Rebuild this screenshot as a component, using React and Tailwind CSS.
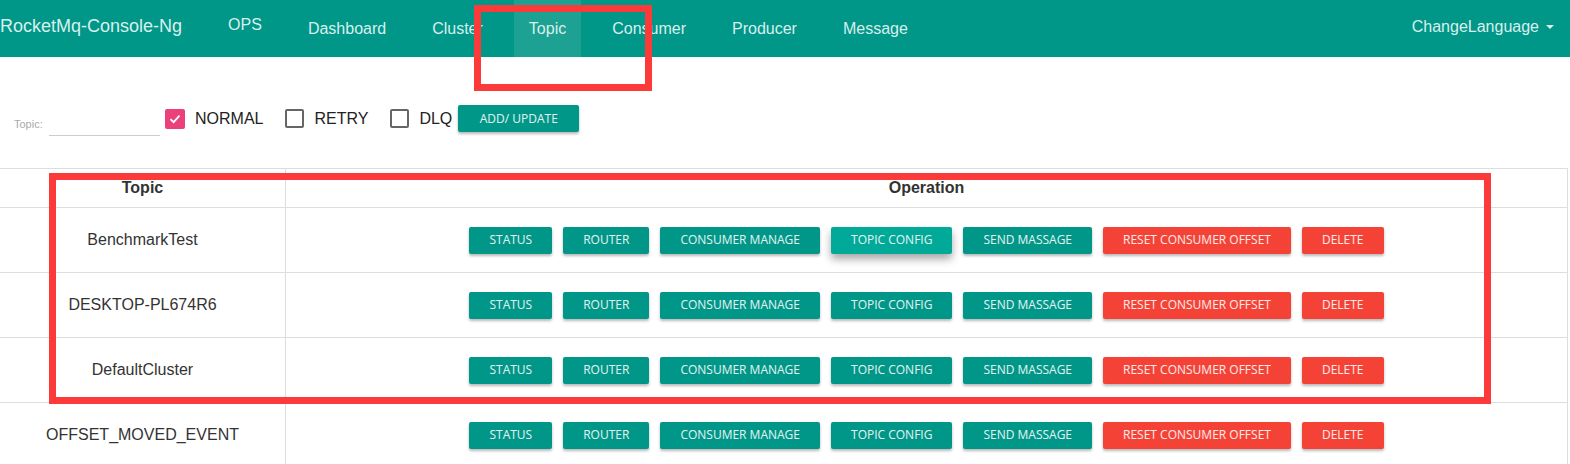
import React from 'react'

const navItems = ['Dashboard', 'Cluster', 'Topic', 'Consumer', 'Producer', 'Message']

const topics = ['BenchmarkTest', 'DESKTOP-PL674R6', 'DefaultCluster', 'OFFSET_MOVED_EVENT']

const ops = [
  { label: 'STATUS', red: false },
  { label: 'ROUTER', red: false },
  { label: 'CONSUMER MANAGE', red: false },
  { label: 'TOPIC CONFIG', red: false },
  { label: 'SEND MASSAGE', red: false },
  { label: 'RESET CONSUMER OFFSET', red: true },
  { label: 'DELETE', red: true },
]

const OpButton = ({ label, red, hover }) => {
  let cls = 'bg-[#009688] shadow-[0_2px_3px_rgba(0,0,0,0.28)]'
  if (red) cls = 'bg-[#f44336] shadow-[0_2px_3px_rgba(0,0,0,0.28)]'
  if (hover) cls = 'bg-[#00a998] shadow-[0_5px_9px_rgba(0,0,0,0.35)]'
  return (
    <button
      className={`h-[27px] px-[20px] rounded-[2px] text-[12px] font-medium text-white/90 whitespace-nowrap ${cls}`}
      style={{ fontFamily: '"Open Sans", sans-serif' }}
    >
      {label}
    </button>
  )
}

const Checkbox = ({ label, checked }) => (
  <label className="flex items-center gap-[10px] text-[16px] text-[#222]">
    {checked ? (
      <span className="w-[20px] h-[20px] rounded-[2px] bg-[#ec407a] flex items-center justify-center">
        <svg width="14" height="14" viewBox="0 0 14 14">
          <path d="M2.5 7.2 L5.6 10.2 L11.5 3.6" fill="none" stroke="white" strokeWidth="1.8" />
        </svg>
      </span>
    ) : (
      <span className="w-[19px] h-[19px] rounded-[2px] border-2 border-[#666]" />
    )}
    <span>{label}</span>
  </label>
)

export default function App() {
  return (
    <div
      className="relative w-[1570px] h-[464px] overflow-hidden bg-white"
      style={{ fontFamily: '"Liberation Sans", Arial, sans-serif' }}
    >
      {/* navbar */}
      <div className="h-[57px] bg-[#009688] flex items-stretch text-[#d8f0ec]">
        <div className="flex items-center pr-[15px] text-[18px] pb-[4px]">RocketMq-Console-Ng</div>
        <div className="flex items-stretch gap-4 ml-4">
          <div className="flex items-center px-[15px] text-[16px] pb-[7px]">OPS</div>
          {navItems.map((item) => (
            <div
              key={item}
              className={`flex items-center px-[15px] text-[16px] ${item === 'Topic' ? 'bg-[#1ca192]' : ''}`}
            >
              {item}
            </div>
          ))}
        </div>
        <div className="ml-auto flex items-center pr-[16px] text-[16px] pb-[4px]">
          ChangeLanguage
          <span className="ml-[7px] w-0 h-0 border-l-[4px] border-r-[4px] border-t-[4px] border-l-transparent border-r-transparent border-t-[#d8f0ec]" />
        </div>
      </div>

      {/* toolbar */}
      <div className="flex items-center h-[111px] pt-[12px]">
        <div className="flex items-end ml-[14px] mr-[5px] mt-[14px]">
          <span className="w-[35px] text-[11px] text-[#aaa] mb-[3px]">Topic:</span>
          <div className="w-[111px] h-[20px] border-b border-[#ccc]" />
        </div>
        <div className="flex items-center gap-[22px]">
          <Checkbox label="NORMAL" checked />
          <Checkbox label="RETRY" />
          <Checkbox label="DLQ" />
        </div>
        <button
          className="ml-[6px] h-[27px] w-[121px] rounded-[2px] bg-[#009688] text-[12px] font-medium text-white/90 shadow-[0_2px_3px_rgba(0,0,0,0.28)]"
          style={{ fontFamily: '"Open Sans", sans-serif' }}
        >
          ADD/ UPDATE
        </button>
      </div>

      {/* table */}
      <div className="w-[1568px] border-t border-r border-[#ddd]">
        <div className="flex h-[39px] border-b border-[#ddd] text-[16px] font-bold text-[#333]">
          <div className="w-[286px] border-r border-[#ddd] flex items-center justify-center">Topic</div>
          <div className="flex-1 flex items-center justify-center">Operation</div>
        </div>
        {topics.map((t, i) => (
          <div key={t} className="flex h-[65px] border-b border-[#ddd]">
            <div className="w-[286px] border-r border-[#ddd] flex items-center justify-center text-[16px] text-[#333]">
              {t}
            </div>
            <div className="flex-1 flex items-center justify-center gap-[11px]">
              {ops.map((o) => (
                <OpButton key={o.label} label={o.label} red={o.red} hover={i === 0 && o.label === 'TOPIC CONFIG'} />
              ))}
            </div>
          </div>
        ))}
      </div>

      {/* annotation boxes */}
      <div className="absolute left-[474px] top-[5px] w-[178px] h-[86px] border-[7px] border-[#fd3a3a]" />
      <div className="absolute left-[49px] top-[173px] w-[1442px] h-[231px] border-[7px] border-[#fd3a3a]" />
    </div>
  )
}
